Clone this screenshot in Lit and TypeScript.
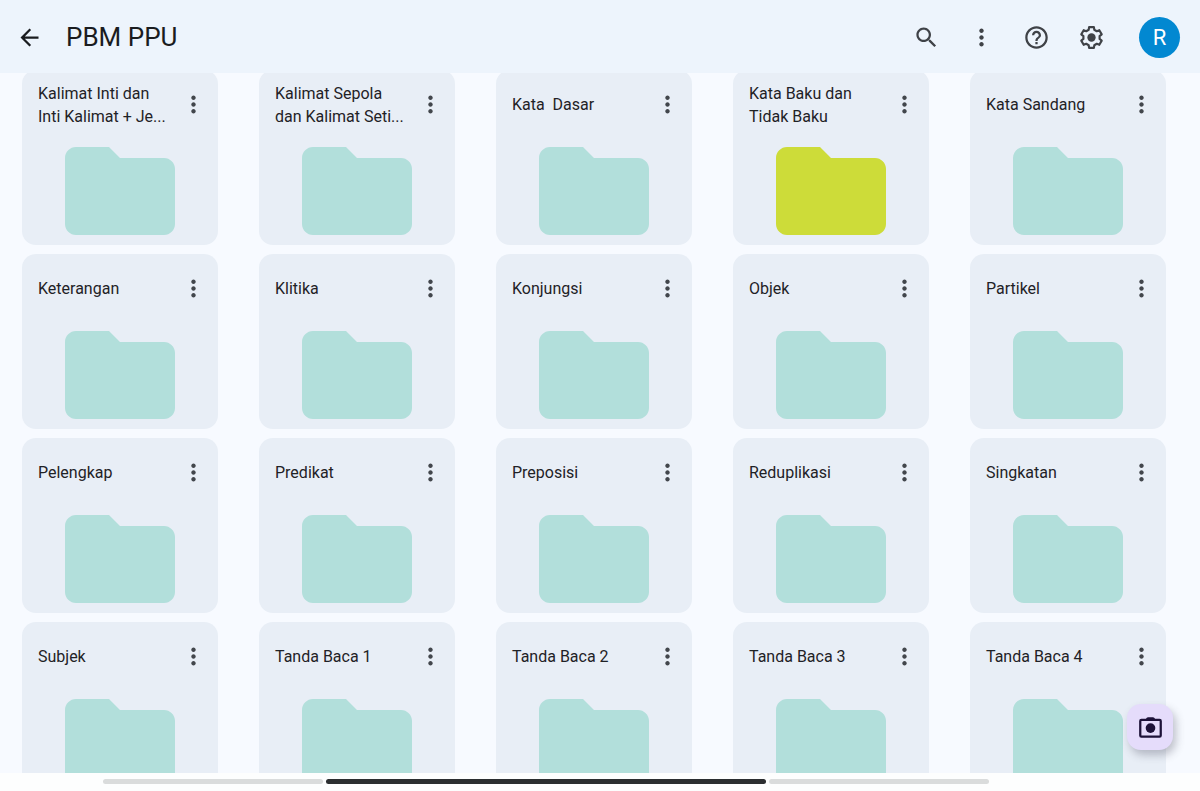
import { LitElement, html, css, svg } from "lit";
import { customElement, property } from "lit/decorators.js";

const icon = (content: unknown, size = 27) => html`
  <svg width=${size} height=${size} viewBox="0 0 24 24" fill="currentColor" aria-hidden="true">${content}</svg>
`;

const icons = {
  back: svg`<path d="M20 11H7.83l5.59-5.59L12 4l-8 8 8 8 1.41-1.41L7.83 13H20v-2z"/>`,
  search: svg`<path d="M15.5 14h-.79l-.28-.27C15.41 12.59 16 11.11 16 9.5 16 5.91 13.09 3 9.5 3S3 5.91 3 9.5 5.91 16 9.5 16c1.61 0 3.09-.59 4.23-1.57l.27.28v.79l5 4.99L20.49 19l-4.99-5zm-6 0C7.01 14 5 11.99 5 9.5S7.01 5 9.5 5 14 7.01 14 9.5 11.99 14 9.5 14z"/>`,
  more: svg`<path d="M12 8c1.1 0 2-.9 2-2s-.9-2-2-2-2 .9-2 2 .9 2 2 2zm0 2c-1.1 0-2 .9-2 2s.9 2 2 2 2-.9 2-2-.9-2-2-2zm0 6c-1.1 0-2 .9-2 2s.9 2 2 2 2-.9 2-2-.9-2-2-2z"/>`,
  help: svg`<path d="M11 18h2v-2h-2v2zm1-16C6.48 2 2 6.48 2 12s4.48 10 10 10 10-4.48 10-10S17.52 2 12 2zm0 18c-4.41 0-8-3.59-8-8s3.59-8 8-8 8 3.59 8 8-3.59 8-8 8zm0-14c-2.21 0-4 1.79-4 4h2c0-1.1.9-2 2-2s2 .9 2 2c0 2-3 1.75-3 5h2c0-2.25 3-2.5 3-5 0-2.21-1.79-4-4-4z"/>`,
  settings: svg`
    <path
      fill="none"
      stroke="currentColor"
      stroke-width="1.9"
      stroke-linejoin="round"
      d="M9.86 2.74h4.28l.36 2.4 2.19 1.27 2.26-.89 2.13 3.7-1.89 1.51v2.54l1.89 1.51-2.13 3.7-2.26-.89-2.19 1.27-.36 2.4H9.86l-.36-2.4-2.19-1.27-2.26.89-2.13-3.7 1.89-1.51v-2.54L2.92 9.22l2.13-3.7 2.26.89L9.5 5.14z"
    />
    <circle cx="12" cy="12" r="3.7" />
  `,
  camera: svg`
    <rect x="2.9" y="5.2" width="18.2" height="14.8" rx="1" fill="none" stroke="currentColor" stroke-width="2" />
    <path d="M7.5 5l1.2-1.6q.4-.6 1.1-.6h4.4q.7 0 1.1.6L16.5 5z" />
    <circle cx="12" cy="12.5" r="4.3" />
  `,
};

@customElement("folder-card")
class FolderCard extends LitElement {
  @property() name = "";
  @property({ reflect: true }) tone = "mint";

  static styles = css`
    :host {
      display: flex;
      flex-direction: column;
      align-items: center;
      box-sizing: border-box;
      padding-bottom: 10px;
      border-radius: 14px;
      background: #e8eef6;
      color: #1f2226;
    }
    .head {
      display: flex;
      align-items: center;
      align-self: stretch;
      height: 69px;
      margin-bottom: 8px;
      padding: 0 11px 0 16px;
    }
    .name {
      flex: 1;
      min-width: 0;
      margin: 0;
      font-size: 16px;
      font-weight: 400;
      line-height: 23px;
      white-space: pre;
    }
    .menu {
      display: flex;
      padding: 0;
      border: 0;
      background: none;
      color: #42464c;
      cursor: pointer;
    }
    .folder {
      width: 110px;
      height: 88px;
      fill: #b2dfdb;
    }
    :host([tone="lime"]) .folder {
      fill: #cddc39;
    }
  `;

  render() {
    return html`
      <div class="head">
        <h2 class="name">${this.name}</h2>
        <button class="menu" aria-label="Opsi">${icon(icons.more)}</button>
      </div>
      <svg class="folder" viewBox="2 4 20 16" aria-hidden="true">
        <path d="M10 4H4c-1.1 0-2 .9-2 2v12c0 1.1.9 2 2 2h16c1.1 0 2-.9 2-2V8c0-1.1-.9-2-2-2h-8l-2-2z" />
      </svg>
    `;
  }
}

const folders: { name: string; tone?: string }[] = [
  { name: "Kalimat Inti dan\nInti Kalimat + Je..." },
  { name: "Kalimat Sepola\ndan Kalimat Seti..." },
  { name: "Kata  Dasar" },
  { name: "Kata Baku dan\nTidak Baku", tone: "lime" },
  { name: "Kata Sandang" },
  { name: "Keterangan" },
  { name: "Klitika" },
  { name: "Konjungsi" },
  { name: "Objek" },
  { name: "Partikel" },
  { name: "Pelengkap" },
  { name: "Predikat" },
  { name: "Preposisi" },
  { name: "Reduplikasi" },
  { name: "Singkatan" },
  { name: "Subjek" },
  { name: "Tanda Baca 1" },
  { name: "Tanda Baca 2" },
  { name: "Tanda Baca 3" },
  { name: "Tanda Baca 4" },
];

@customElement("app-root")
class AppRoot extends LitElement {
  static styles = css`
    :host {
      display: flex;
      flex-direction: column;
      position: relative;
      height: 100vh;
      overflow: hidden;
      background: #f7faff;
      font-family: Roboto, "Liberation Sans", sans-serif;
      color: #1a1c1f;
    }
    button {
      display: flex;
      align-items: center;
      justify-content: center;
      padding: 0;
      border: 0;
      background: none;
      color: inherit;
      font: inherit;
      cursor: pointer;
    }
    .bar {
      display: flex;
      flex: none;
      align-items: center;
      height: 72px;
      padding: 1px 20px 0 16px;
      background: #edf4fc;
    }
    .title {
      flex: 1;
      margin: 0 0 0 23px;
      font-size: 26px;
      font-weight: 400;
      line-height: 32px;
    }
    .action {
      width: 55px;
      height: 55px;
      color: #3f4247;
    }
    .bar .avatar {
      width: 41px;
      height: 41px;
      margin-left: 20px;
      border-radius: 50%;
      background: #0288d1;
      color: #fff;
      font-size: 22px;
    }
    .content {
      flex: 1;
      min-height: 0;
      overflow: hidden;
    }
    .grid {
      display: grid;
      grid-template-columns: repeat(5, minmax(0, 1fr));
      gap: 9px 41px;
      margin-top: -3px;
      padding: 0 34px 0 22px;
    }
    .scan {
      position: absolute;
      right: 27px;
      bottom: 41px;
      width: 46px;
      height: 46px;
      border-radius: 14px;
      background: #e5dcfb;
      box-shadow: 3px 5px 8px rgba(60, 60, 80, 0.3);
      color: #1d1238;
    }
    .nav {
      display: grid;
      grid-template-columns: 1fr 2fr 1fr;
      flex: none;
      gap: 3px;
      height: 5px;
      padding: 6px 211px 7px 103px;
      background: #fdfefe;
    }
    .track {
      border-radius: 3px;
      background: #dadcdc;
    }
    .current {
      background: #2b2e30;
    }
  `;

  render() {
    return html`
      <header class="bar">
        <button aria-label="Kembali">${icon(icons.back)}</button>
        <h1 class="title">PBM PPU</h1>
        <button class="action" aria-label="Telusuri">${icon(icons.search)}</button>
        <button class="action" aria-label="Opsi lainnya">${icon(icons.more)}</button>
        <button class="action" aria-label="Bantuan">${icon(icons.help)}</button>
        <button class="action" aria-label="Setelan">${icon(icons.settings)}</button>
        <button class="avatar">R</button>
      </header>
      <main class="content">
        <div class="grid">
          ${folders.map((f) => html`<folder-card .name=${f.name} tone=${f.tone ?? "mint"}></folder-card>`)}
        </div>
      </main>
      <button class="scan" aria-label="Pindai">${icon(icons.camera)}</button>
      <div class="nav">
        <span class="track"></span>
        <span class="track current"></span>
        <span class="track"></span>
      </div>
    `;
  }
}
